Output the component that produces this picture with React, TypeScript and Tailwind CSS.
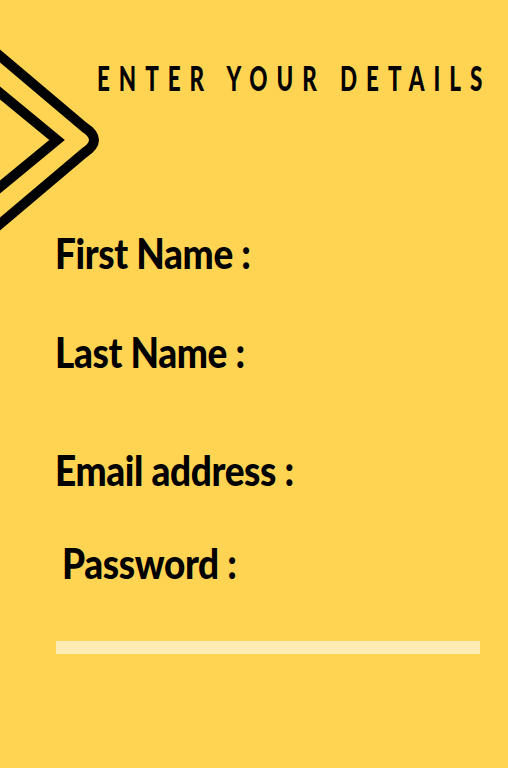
import React from "react";

const FONT = { fontFamily: 'Lato, "Open Sans", sans-serif' };

const FIELDS = [
  { label: "First Name :", cls: "mt-[135px] ml-[55px]" },
  { label: "Last Name :", cls: "mt-[57px] ml-[55px]" },
  { label: "Email address :", cls: "mt-[76px] ml-[55px]" },
  { label: "Password :", cls: "mt-[51px] ml-[62px]" },
];

function Chevrons() {
  return (
    <svg
      className="absolute left-0 top-0"
      width="112"
      height="260"
      viewBox="0 0 112 260"
      fill="none"
      stroke="#000"
      strokeWidth="10"
    >
      <path d="M-6 51 L84 127 Q104 140 84 153 L-6 229" strokeLinejoin="round" />
      <path d="M-6 88 L57 140 L-6 192" strokeLinejoin="miter" />
    </svg>
  );
}

export default function App() {
  return (
    <div className="relative w-[508px] h-[768px] overflow-hidden bg-[#FED452] flex flex-col">
      <Chevrons />

      <h1
        className="mt-[59px] ml-[97px] whitespace-nowrap origin-left scale-x-[0.66] text-[34px] leading-[38px] font-black tracking-[0.4em] text-black"
        style={FONT}
      >
        ENTER YOUR DETAILS
      </h1>

      {FIELDS.map((f) => (
        <div
          key={f.label}
          className={`${f.cls} whitespace-nowrap origin-left scale-x-[0.88] text-[42px] leading-[42px] font-black tracking-[-0.01em] text-black`}
          style={FONT}
        >
          {f.label}
        </div>
      ))}

      <div className="mt-[57px] ml-[56px] w-[424px] h-[13px] bg-[#FDEDB5]" />
    </div>
  );
}
